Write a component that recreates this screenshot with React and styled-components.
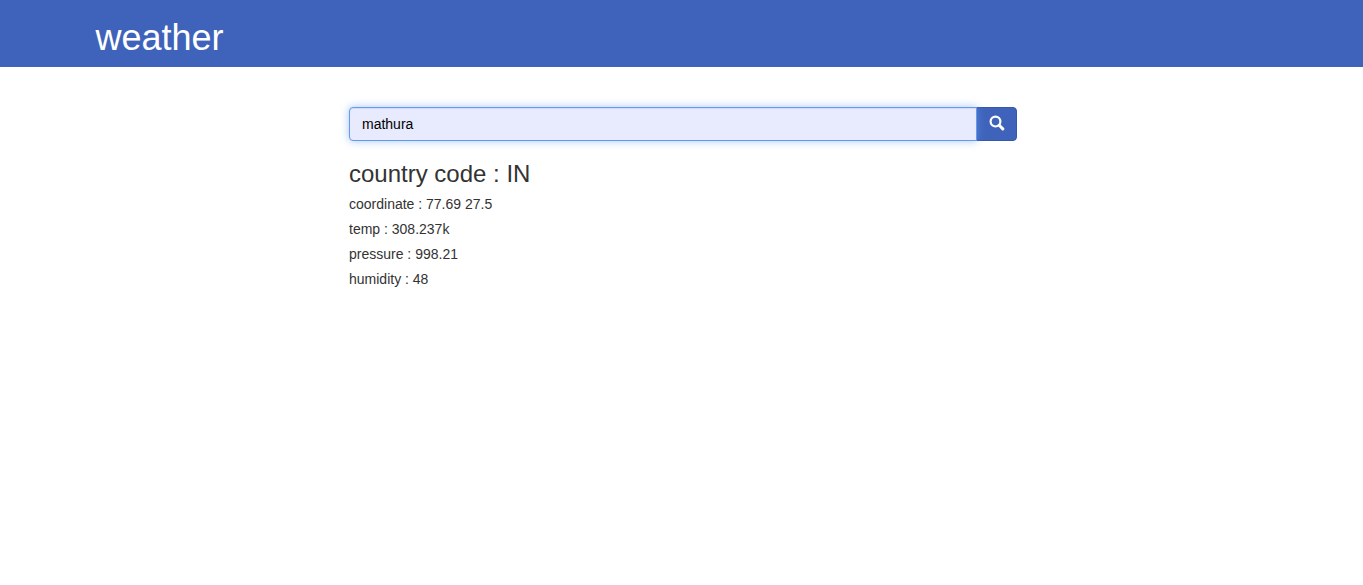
import React, { useState } from "react";
import styled, { createGlobalStyle } from "styled-components";

const GlobalStyle = createGlobalStyle`
  *, *::before, *::after { box-sizing: border-box; }
  body {
    margin: 0;
    background: #fff;
    color: #333;
    font: 14px/20px "Liberation Sans", Arial, sans-serif;
  }
`;

const Header = styled.header`
  background: #3f63ba;
  padding: 18px 0 9px;
`;

const Container = styled.div`
  width: 100%;
  max-width: 1172px;
  margin: 0 auto;
`;

const Title = styled.h1`
  margin: 0;
  color: #fff;
  font-size: 36px;
  font-weight: 400;
  line-height: 40px;
`;

const Main = styled.main`
  display: grid;
  grid-template-columns: 349fr 668fr 346fr;
  padding-top: 40px;
`;

const Content = styled.div`
  grid-column: 2;
`;

const SearchForm = styled.form`
  display: flex;
`;

const SearchInput = styled.input`
  position: relative;
  z-index: 1;
  flex: 1;
  min-width: 0;
  height: 34px;
  padding: 6px 12px;
  border: 1px solid #6699ee;
  border-radius: 4px 0 0 4px;
  background: #e8ebfe;
  color: #000;
  font: inherit;
  outline: 0;
  box-shadow: inset 0 1px 1px rgba(0, 0, 0, 0.075), 0 0 8px rgba(102, 160, 240, 0.6);
`;

const SearchButton = styled.button`
  display: flex;
  align-items: center;
  justify-content: center;
  width: 41px;
  height: 34px;
  margin-left: -1px;
  padding: 0 0 2px;
  border: 1px solid #3658a8;
  border-radius: 0 4px 4px 0;
  background: #3f63ba;
  color: #fff;
  cursor: pointer;
`;

const Country = styled.h3`
  margin: 20px 0 7px;
  font-size: 24px;
  font-weight: 400;
  line-height: 26px;
`;

const Reading = styled.p`
  margin: 0 0 5px;
`;

const SearchIcon = () => (
  <svg width="16" height="16" viewBox="0 0 16 16" fill="none" stroke="currentColor" aria-hidden="true">
    <circle cx="6.5" cy="6.6" r="4.9" strokeWidth="2.2" />
    <path d="M10.2 10.3 L13.8 13.9" strokeWidth="3" strokeLinecap="round" />
  </svg>
);

const readings = [
  ["coordinate", "77.69 27.5"],
  ["temp", "308.237k"],
  ["pressure", "998.21"],
  ["humidity", "48"],
];

export default function App() {
  const [city, setCity] = useState("mathura");
  return (
    <>
      <GlobalStyle />
      <Header>
        <Container>
          <Title>weather</Title>
        </Container>
      </Header>
      <Main>
        <Content>
          <SearchForm role="search" onSubmit={(e) => e.preventDefault()}>
            <SearchInput
              type="text"
              aria-label="City"
              value={city}
              onChange={(e) => setCity(e.target.value)}
            />
            <SearchButton type="submit" aria-label="Search">
              <SearchIcon />
            </SearchButton>
          </SearchForm>
          <Country>country code : IN</Country>
          {readings.map(([name, value]) => (
            <Reading key={name}>{`${name} : ${value}`}</Reading>
          ))}
        </Content>
      </Main>
    </>
  );
}
